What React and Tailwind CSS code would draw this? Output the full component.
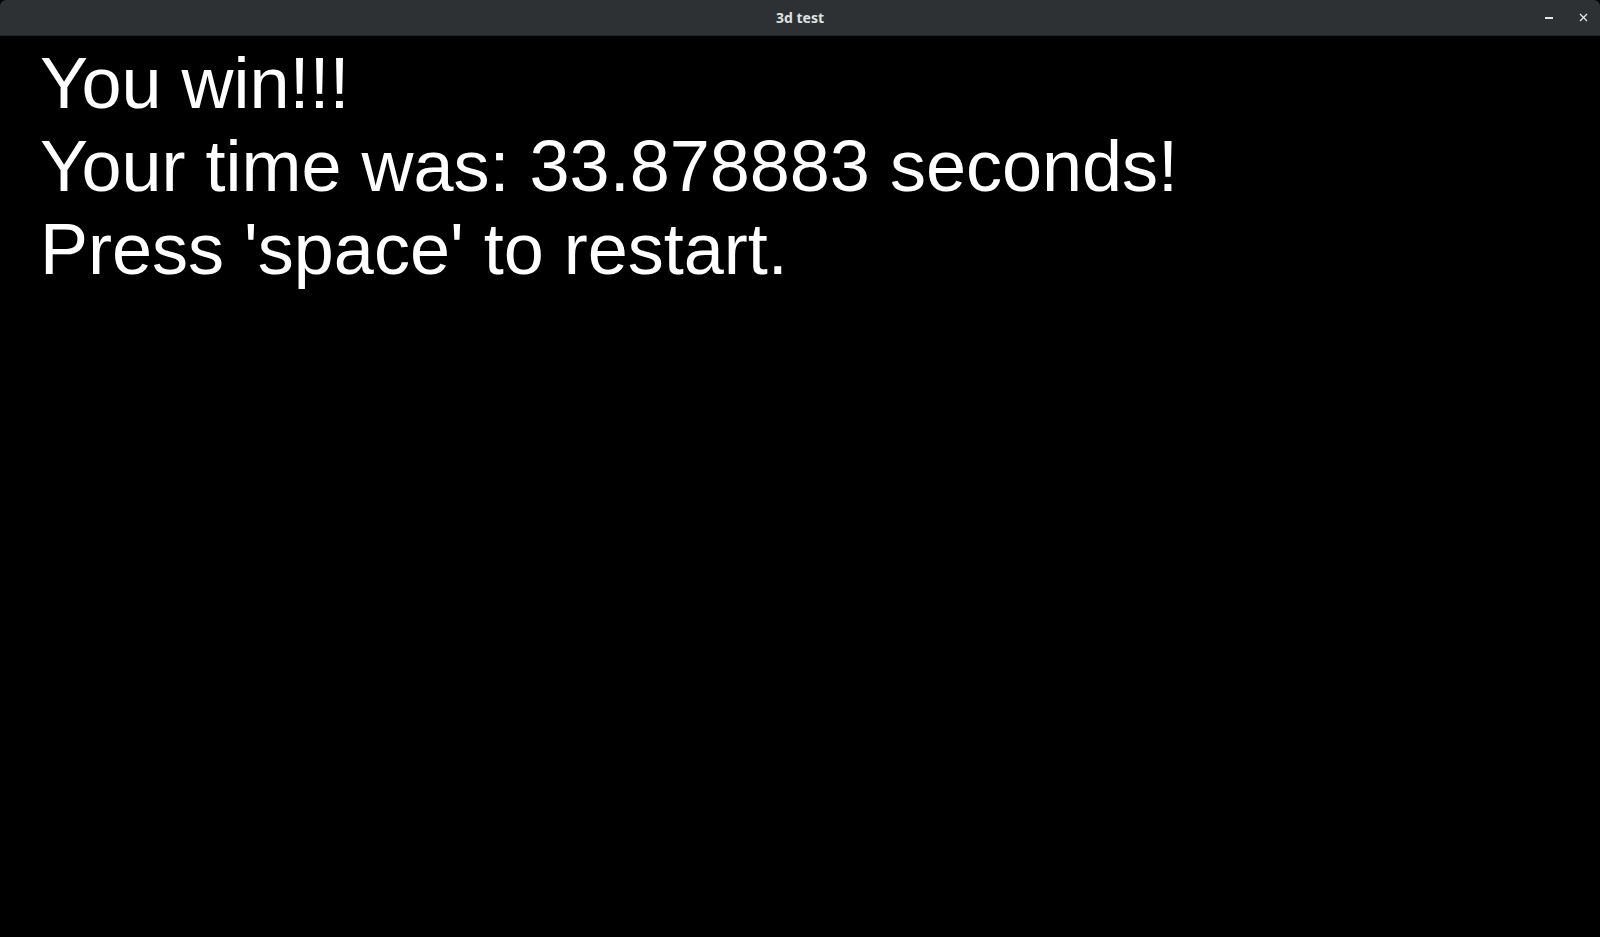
export default function App() {
  return (
    <div className="flex h-[937px] w-[1600px] flex-col bg-black">
      {/* window title bar */}
      <div className="relative flex h-[36px] shrink-0 items-center justify-center rounded-t-[6px] border-b border-[#1f2224] bg-[#2d3133]">
        <span className="text-[14px] font-bold text-[#dfe1e1] font-['Noto_Sans','DejaVu_Sans',sans-serif]">3d test</span>
        <div className="absolute right-0 top-0 flex h-full items-center">
          <div className="flex h-full w-[34px] items-center justify-center">
            <div className="mt-[1px] h-[1.5px] w-[8px] bg-[#e6e6e6]" />
          </div>
          <div className="flex h-full w-[34px] items-center justify-center">
            <svg width="9" height="9" viewBox="0 0 9 9" className="text-[#e6e6e6]">
              <path d="M1 1L8 8M8 1L1 8" stroke="currentColor" strokeWidth="1.3" />
            </svg>
          </div>
        </div>
      </div>

      {/* game over text */}
      <div className="flex flex-col pl-[40px] pt-[6px] text-[72px] leading-[83px] text-white font-['Liberation_Sans',Arial,sans-serif]">
        <p>You win!!!</p>
        <p>Your time was: 33.878883 seconds!</p>
        <p>Press 'space' to restart.</p>
      </div>
    </div>
  );
}
